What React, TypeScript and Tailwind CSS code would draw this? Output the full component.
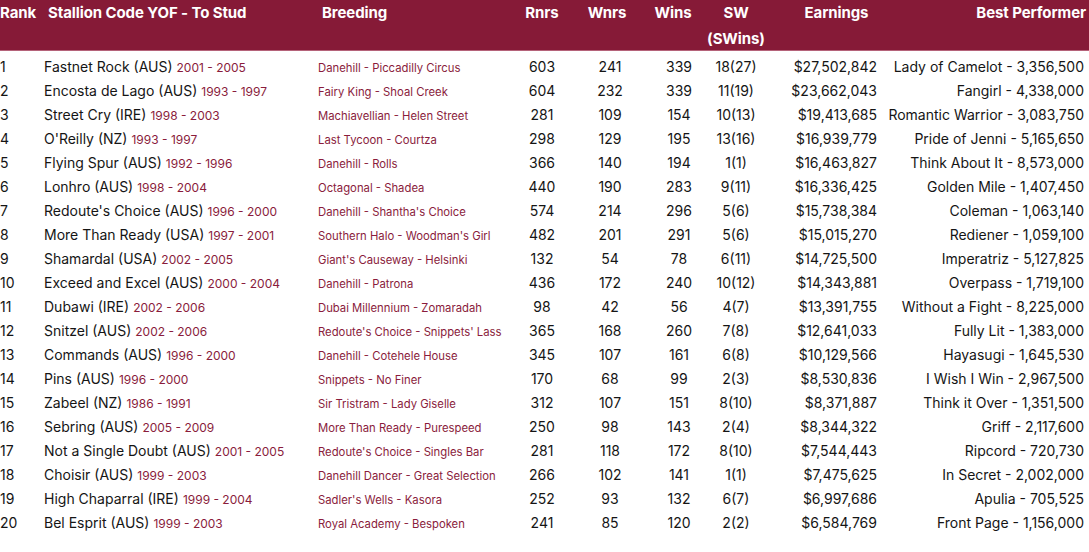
import React from "react";

const rows: [string, string, string, string, number, number, number, string, string, string][] = [
  ["1", "Fastnet Rock (AUS)", "2001 - 2005", "Danehill - Piccadilly Circus", 603, 241, 339, "18(27)", "$27,502,842", "Lady of Camelot - 3,356,500"],
  ["2", "Encosta de Lago (AUS)", "1993 - 1997", "Fairy King - Shoal Creek", 604, 232, 339, "11(19)", "$23,662,043", "Fangirl - 4,338,000"],
  ["3", "Street Cry (IRE)", "1998 - 2003", "Machiavellian - Helen Street", 281, 109, 154, "10(13)", "$19,413,685", "Romantic Warrior - 3,083,750"],
  ["4", "O'Reilly (NZ)", "1993 - 1997", "Last Tycoon - Courtza", 298, 129, 195, "13(16)", "$16,939,779", "Pride of Jenni - 5,165,650"],
  ["5", "Flying Spur (AUS)", "1992 - 1996", "Danehill - Rolls", 366, 140, 194, "1(1)", "$16,463,827", "Think About It - 8,573,000"],
  ["6", "Lonhro (AUS)", "1998 - 2004", "Octagonal - Shadea", 440, 190, 283, "9(11)", "$16,336,425", "Golden Mile - 1,407,450"],
  ["7", "Redoute's Choice (AUS)", "1996 - 2000", "Danehill - Shantha's Choice", 574, 214, 296, "5(6)", "$15,738,384", "Coleman - 1,063,140"],
  ["8", "More Than Ready (USA)", "1997 - 2001", "Southern Halo - Woodman's Girl", 482, 201, 291, "5(6)", "$15,015,270", "Rediener - 1,059,100"],
  ["9", "Shamardal (USA)", "2002 - 2005", "Giant's Causeway - Helsinki", 132, 54, 78, "6(11)", "$14,725,500", "Imperatriz - 5,127,825"],
  ["10", "Exceed and Excel (AUS)", "2000 - 2004", "Danehill - Patrona", 436, 172, 240, "10(12)", "$14,343,881", "Overpass - 1,719,100"],
  ["11", "Dubawi (IRE)", "2002 - 2006", "Dubai Millennium - Zomaradah", 98, 42, 56, "4(7)", "$13,391,755", "Without a Fight - 8,225,000"],
  ["12", "Snitzel (AUS)", "2002 - 2006", "Redoute's Choice - Snippets' Lass", 365, 168, 260, "7(8)", "$12,641,033", "Fully Lit - 1,383,000"],
  ["13", "Commands (AUS)", "1996 - 2000", "Danehill - Cotehele House", 345, 107, 161, "6(8)", "$10,129,566", "Hayasugi - 1,645,530"],
  ["14", "Pins (AUS)", "1996 - 2000", "Snippets - No Finer", 170, 68, 99, "2(3)", "$8,530,836", "I Wish I Win - 2,967,500"],
  ["15", "Zabeel (NZ)", "1986 - 1991", "Sir Tristram - Lady Giselle", 312, 107, 151, "8(10)", "$8,371,887", "Think it Over - 1,351,500"],
  ["16", "Sebring (AUS)", "2005 - 2009", "More Than Ready - Purespeed", 250, 98, 143, "2(4)", "$8,344,322", "Griff - 2,117,600"],
  ["17", "Not a Single Doubt (AUS)", "2001 - 2005", "Redoute's Choice - Singles Bar", 281, 118, 172, "8(10)", "$7,544,443", "Ripcord - 720,730"],
  ["18", "Choisir (AUS)", "1999 - 2003", "Danehill Dancer - Great Selection", 266, 102, 141, "1(1)", "$7,475,625", "In Secret - 2,002,000"],
  ["19", "High Chaparral (IRE)", "1999 - 2004", "Sadler's Wells - Kasora", 252, 93, 132, "6(7)", "$6,997,686", "Apulia - 705,525"],
  ["20", "Bel Esprit (AUS)", "1999 - 2003", "Royal Academy - Bespoken", 241, 85, 120, "2(2)", "$6,584,769", "Front Page - 1,156,000"],
];

export default function App() {
  return (
    <div
      className="w-[1089px] h-[552px] bg-white overflow-hidden text-[#151515]"
      style={{ fontFamily: "Inter, 'Noto Sans', sans-serif" }}
    >
      <div className="h-[51px] bg-[#861a37] border-b border-[#b5637a] text-white font-bold text-[15px] leading-[26px] tracking-[-0.1px] flex">
        <div className="w-[44px] whitespace-nowrap">Rank</div>
        <div className="w-[274px] pl-[4px] whitespace-nowrap">Stallion Code YOF - To Stud</div>
        <div className="w-[190px] pl-[4px]">Breeding</div>
        <div className="w-[68px] text-center">Rnrs</div>
        <div className="w-[62px] text-center">Wnrs</div>
        <div className="w-[70px] text-center">Wins</div>
        <div className="w-[56px] flex flex-col items-center whitespace-nowrap">
          <span>SW</span>
          <span>(SWins)</span>
        </div>
        <div className="w-[141px] text-center pl-[4px]">Earnings</div>
        <div className="flex-1 text-right pr-[3px] whitespace-nowrap">Best Performer</div>
      </div>
      <div className="pt-[4px]">
        {rows.map((r) => (
          <div key={r[0]} className="h-[24px] leading-[24px] flex items-baseline text-[14px] whitespace-nowrap">
            <div className="w-[44px]">{r[0]}</div>
            <div className="w-[274px]">
              <span>{r[1]}</span>
              <span className="ml-[4px] text-[12px] text-[#8a1c3c]">{r[2]}</span>
            </div>
            <div className="w-[190px] text-[11.3px] text-[#8a1c3c]">{r[3]}</div>
            <div className="w-[68px] text-center">{r[4]}</div>
            <div className="w-[68px] text-center">{r[5]}</div>
            <div className="w-[70px] text-center">{r[6]}</div>
            <div className="w-[44px] text-center">{r[7]}</div>
            <div className="w-[119px] text-right">{r[8]}</div>
            <div className="w-[207px] text-right">{r[9]}</div>
          </div>
        ))}
      </div>
    </div>
  );
}
